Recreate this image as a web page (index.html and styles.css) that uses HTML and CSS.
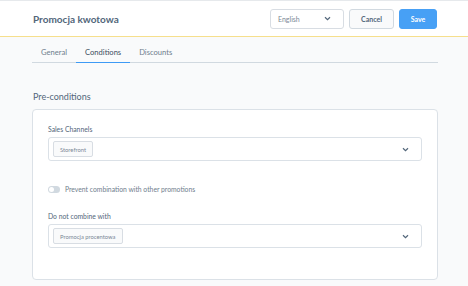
FILE: index.html
```html
<!DOCTYPE html>
<html lang="pl">
<head>
    <meta charset="UTF-8">
    <meta name="viewport" content="width=device-width, initial-scale=1.0">
    <title>Promocja kwotowa</title>
    <link rel="stylesheet" href="styles.css">
</head>
<body>
    <div class="naglowek">
        <div class="tytul">Promocja kwotowa</div>
        <div class="akcje">
            <div class="jezyk">
                <span>English</span>
                <svg class="strzalka" width="7" height="5" viewBox="0 0 7 5"><path d="M1 1.2 L3.5 3.6 L6 1.2" fill="none" stroke="#52667a" stroke-width="1.2"/></svg>
            </div>
            <button class="btn btn-anuluj">Cancel</button>
            <button class="btn btn-zapisz">Save</button>
        </div>
    </div>

    <div class="tresc">
        <div class="zakladki">
            <div class="zakladka">General</div>
            <div class="zakladka aktywna">Conditions</div>
            <div class="zakladka">Discounts</div>
        </div>

        <h3 class="sekcja">Pre-conditions</h3>

        <div class="karta">
            <label class="etykieta">Sales Channels</label>
            <div class="pole">
                <span class="tag">Storefront</span>
                <svg class="strzalka" width="7" height="5" viewBox="0 0 7 5"><path d="M1 1.2 L3.5 3.6 L6 1.2" fill="none" stroke="#52667a" stroke-width="1.2"/></svg>
            </div>

            <div class="przelacznik-wiersz">
                <span class="przelacznik"><span class="galka"></span></span>
                <span>Prevent combination with other promotions</span>
            </div>

            <label class="etykieta">Do not combine with</label>
            <div class="pole">
                <span class="tag">Promocja procentowa</span>
                <svg class="strzalka" width="7" height="5" viewBox="0 0 7 5"><path d="M1 1.2 L3.5 3.6 L6 1.2" fill="none" stroke="#52667a" stroke-width="1.2"/></svg>
            </div>
        </div>
    </div>
</body>
</html>
```

FILE: styles.css
```css
body {
    font-family: 'Lato', 'Liberation Sans', sans-serif;
    margin: 0;
    padding: 0;
    background-color: #f9fafb;
    color: #52667a;
    width: 468px;
    height: 286px;
    overflow: hidden;
}

.naglowek {
    height: 35px;
    background: #fff;
    border-top: 1px solid #e6e9ec;
    border-bottom: 1px solid #f6df8c;
    display: flex;
    align-items: center;
    justify-content: space-between;
    padding: 0 31px 0 33px;
}

.tytul {
    font-size: 10px;
    font-weight: 700;
    color: #52667a;
}

.akcje {
    display: flex;
    gap: 5px;
}

.jezyk {
    width: 74px;
    height: 20px;
    box-sizing: border-box;
    border: 1px solid #d8dde3;
    border-radius: 3px;
    display: flex;
    align-items: center;
    justify-content: space-between;
    padding: 0 12px 0 7px;
    font-size: 7px;
    color: #7a8896;
}

.btn {
    height: 20px;
    border-radius: 3px;
    font-family: inherit;
    font-size: 7px;
    font-weight: 700;
    padding: 0;
    cursor: pointer;
}

.btn-anuluj {
    width: 45px;
    background: #f9fafb;
    border: 1px solid #d1d9e0;
    color: #52667a;
}

.btn-zapisz {
    width: 38px;
    background: #47a0f5;
    border: 1px solid #47a0f5;
    color: #fff;
}

.tresc {
    padding: 0 30px 0 32px;
}

.zakladki {
    display: flex;
    border-bottom: 1px solid #d1d9e0;
}

.zakladka {
    font-size: 7.6px;
    line-height: 10px;
    padding: 10px 9px 5px;
    margin-bottom: -1px;
    border-bottom: 1px solid transparent;
    color: #6f7e8d;
}

.zakladka.aktywna {
    color: #3d4e5f;
    border-bottom-color: #3d9af5;
}

.sekcja {
    font-size: 9px;
    line-height: 12px;
    font-weight: 400;
    color: #52667a;
    margin: 28px 0 6px 1px;
}

.karta {
    background: #fff;
    border: 1px solid #dbe1e7;
    border-radius: 4px;
    padding: 15px 15px 31px;
}

.etykieta {
    display: block;
    font-size: 6.8px;
    line-height: 8px;
    color: #52667a;
    margin-bottom: 4px;
}

.pole {
    height: 24px;
    box-sizing: border-box;
    border: 1px solid #dbe1e7;
    border-radius: 3px;
    display: flex;
    align-items: center;
    justify-content: space-between;
    padding: 0 12px 0 4px;
}

.tag {
    height: 16px;
    box-sizing: border-box;
    background: #f9fafb;
    border: 1px solid #d8dde3;
    border-radius: 2px;
    font-size: 5.8px;
    color: #7a8896;
    padding: 0 6px;
    display: flex;
    align-items: center;
}

.przelacznik-wiersz {
    display: flex;
    align-items: center;
    gap: 5px;
    font-size: 6.8px;
    line-height: 8px;
    color: #6f7e8d;
    margin: 24px 0 19px;
}

.przelacznik {
    width: 12px;
    height: 7px;
    border-radius: 4px;
    background: #d1d9e0;
    display: flex;
    align-items: center;
    padding: 0 1px;
    box-sizing: border-box;
}

.galka {
    width: 5px;
    height: 5px;
    border-radius: 50%;
    background: #fff;
}
```
